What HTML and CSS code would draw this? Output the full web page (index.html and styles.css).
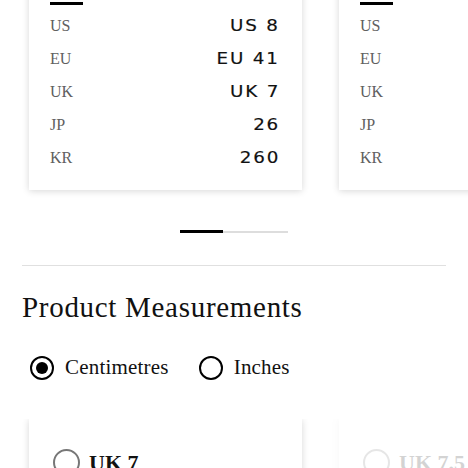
FILE: index.html
```html
<!DOCTYPE html>
<html>
<head>
<meta charset="utf-8">
<link rel="stylesheet" href="styles.css">
</head>
<body>
<div class="page">
  <div class="carousel">
    <div class="card">
      <div class="bar"></div>
      <div class="row"><span class="lbl">US</span><span class="val">US 8</span></div>
      <div class="row"><span class="lbl">EU</span><span class="val">EU 41</span></div>
      <div class="row"><span class="lbl">UK</span><span class="val">UK 7</span></div>
      <div class="row"><span class="lbl">JP</span><span class="val">26</span></div>
      <div class="row"><span class="lbl">KR</span><span class="val">260</span></div>
    </div>
    <div class="card">
      <div class="bar"></div>
      <div class="row"><span class="lbl">US</span></div>
      <div class="row"><span class="lbl">EU</span></div>
      <div class="row"><span class="lbl">UK</span></div>
      <div class="row"><span class="lbl">JP</span></div>
      <div class="row"><span class="lbl">KR</span></div>
    </div>
  </div>

  <div class="pager"><span class="pager-on"></span><span class="pager-off"></span></div>

  <hr class="divider">

  <h2 class="title">Product Measurements</h2>

  <div class="units">
    <label class="unit"><span class="radio checked"></span><span class="unit-text">Centimetres</span></label>
    <label class="unit"><span class="radio"></span><span class="unit-text">Inches</span></label>
  </div>

  <div class="carousel lower">
    <div class="card size">
      <div class="size-head"><span class="radio small"></span><span class="size-name">UK 7</span></div>
    </div>
    <div class="card size faded">
      <div class="size-head"><span class="radio small"></span><span class="size-name">UK 7.5</span></div>
    </div>
  </div>
</div>
</body>
</html>
```

FILE: styles.css
```css
html, body {
  margin: 0;
  padding: 0;
  background: #fff;
  overflow: hidden;
}
.page {
  padding: 0 22px;
  font-family: "Liberation Serif", serif;
  color: #111;
}
.carousel {
  margin: -20px -22px 0;
  padding: 0 0 12px 29px;
  display: flex;
  gap: 37px;
  overflow: hidden;
}
.card {
  flex: 0 0 273px;
  background: #fff;
  box-shadow: 0 1px 7px rgba(0,0,0,0.16);
  padding: 22px 22px 16px 21px;
  box-sizing: border-box;
}
.bar {
  width: 33px;
  height: 3px;
  background: #000;
  margin-bottom: 4px;
}
.row {
  height: 33px;
  display: flex;
  align-items: center;
  justify-content: space-between;
}
.lbl {
  font-family: "Liberation Serif", serif;
  font-size: 16px;
  color: #606060;
}
.val {
  display: inline-block;
  font-family: "DejaVu Sans", sans-serif;
  font-size: 15px;
  letter-spacing: 1.5px;
  color: #111;
  transform: scaleX(1.22);
  transform-origin: right center;
  -webkit-text-stroke: 0.15px #111;
}
.pager {
  display: flex;
  align-items: center;
  justify-content: center;
  margin-top: 28px;
  height: 3px;
}
.pager-on {
  width: 43px;
  height: 3px;
  background: #000;
}
.pager-off {
  width: 65px;
  height: 2px;
  background: #ddd;
}
.divider {
  border: 0;
  border-top: 1px solid #e0e0e0;
  margin: 32px 0 0;
}
.title {
  font-family: "Liberation Serif", serif;
  font-weight: normal;
  font-size: 29px;
  letter-spacing: 0.7px;
  margin: 24px 0 0;
  line-height: 34px;
  color: #111;
}
.units {
  display: flex;
  gap: 30px;
  margin-top: 31px;
  padding-left: 8px;
}
.unit {
  display: flex;
  align-items: center;
  gap: 11px;
}
.unit-text {
  font-size: 21px;
  letter-spacing: 0.2px;
  color: #111;
}
.radio {
  width: 24px;
  height: 24px;
  box-sizing: border-box;
  border: 2.5px solid #000;
  border-radius: 50%;
  display: flex;
  align-items: center;
  justify-content: center;
}
.radio.checked::after {
  content: "";
  width: 12px;
  height: 12px;
  border-radius: 50%;
  background: #000;
}
.lower {
  margin-top: 39px;
}
.card.size {
  padding: 30px 20px 40px 24px;
  height: 90px;
}
.size-head {
  display: flex;
  align-items: center;
  gap: 9px;
}
.radio.small {
  width: 27px;
  height: 27px;
  border: 2px solid #777;
}
.size-name {
  font-weight: bold;
  font-size: 22px;
  color: #111;
}
.faded {
  opacity: 0.18;
}
```
